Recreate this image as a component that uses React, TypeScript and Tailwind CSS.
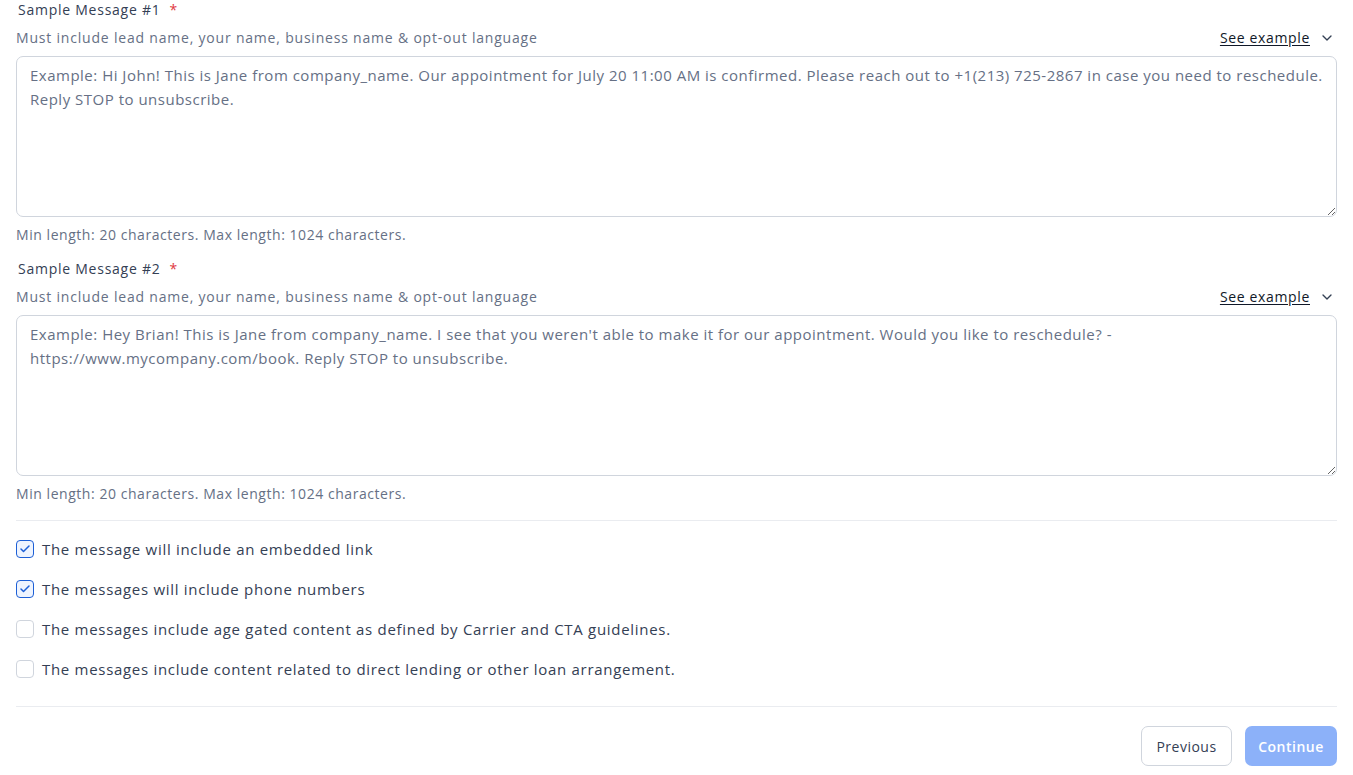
import { ChevronDown, Check } from 'lucide-react';

const messages = [
  {
    label: 'Sample Message #1',
    placeholder:
      'Example: Hi John! This is Jane from company_name. Our appointment for July 20 11:00 AM is confirmed. Please reach out to +1(213) 725-2867 in case you need to reschedule. Reply STOP to unsubscribe.',
  },
  {
    label: 'Sample Message #2',
    placeholder:
      "Example: Hey Brian! This is Jane from company_name. I see that you weren't able to make it for our appointment. Would you like to reschedule? - https://www.mycompany.com/book. Reply STOP to unsubscribe.",
  },
];

const options = [
  { text: 'The message will include an embedded link', checked: true },
  { text: 'The messages will include phone numbers', checked: true },
  { text: 'The messages include age gated content as defined by Carrier and CTA guidelines.', checked: false },
  { text: 'The messages include content related to direct lending or other loan arrangement.', checked: false },
];

function MessageField({ label, placeholder }: { label: string; placeholder: string }) {
  return (
    <div className="flex flex-col">
      <div className="flex items-center gap-[9px] pl-[2px] text-[14px] leading-[20px] font-medium tracking-[0.75px] text-[#344054]">
        <span>{label}</span>
        <span className="text-[#e0393e]">*</span>
      </div>
      <div className="mt-[8px] flex items-center justify-between text-[14px] leading-[20px] text-[#667085]">
        <span className="tracking-[0.8px]">Must include lead name, your name, business name &amp; opt-out language</span>
        <button className="flex items-center gap-[9px] pr-[2px] tracking-[0.65px] text-[#101828] underline underline-offset-2">
          See example
          <ChevronDown className="w-4 h-4 text-[#344054]" strokeWidth={2} />
        </button>
      </div>
      <textarea
        className="mt-[8px] h-[161px] w-full rounded-[7px] border border-[#d0d5dd] bg-white px-[13px] py-[6px] text-[15px] leading-[24px] tracking-[0.5px] text-[#344054] placeholder:text-[#667085] outline-none"
        placeholder={placeholder}
      />
      <p className="mt-[8px] text-[14px] leading-[20px] tracking-[0.55px] text-[#667085]">
        Min length: 20 characters. Max length: 1024 characters.
      </p>
    </div>
  );
}

export default function App() {
  return (
    <div
      className="min-h-screen bg-white px-4"
      style={{ fontFamily: '"Open Sans", "Noto Sans", sans-serif' }}
    >
      <div className="flex flex-col gap-[14px]">
        {messages.map((m) => (
          <MessageField key={m.label} label={m.label} placeholder={m.placeholder} />
        ))}
      </div>

      <div className="mt-[16px] border-t border-[#eaecf0] pt-[18px] pb-[27px] flex flex-col gap-[20px]">
        {options.map((o) => (
          <label key={o.text} className="flex items-center gap-[8px] h-[20px] text-[15px] tracking-[0.7px] text-[#344054]">
            <span
              className={`flex items-center justify-center w-[18px] h-[18px] rounded-[4px] border ${
                o.checked ? 'border-[#1d5fd6] bg-[#eef4ff]' : 'border-[#d0d5dd] bg-white'
              }`}
            >
              {o.checked && <Check className="w-3 h-3 text-[#1d5fd6]" strokeWidth={3} />}
            </span>
            <span>{o.text}</span>
          </label>
        ))}
      </div>

      <div className="border-t border-[#eaecf0] pt-[19px] flex justify-end gap-[13px]">
        <button className="h-[40px] w-[91px] rounded-[7px] border border-[#d0d5dd] bg-white text-[14px] font-medium tracking-[0.5px] text-[#344054]">
          Previous
        </button>
        <button className="h-[40px] w-[92px] rounded-[7px] bg-[#8cb1f9] text-[14px] font-semibold tracking-[0.5px] text-white">
          Continue
        </button>
      </div>
    </div>
  );
}
